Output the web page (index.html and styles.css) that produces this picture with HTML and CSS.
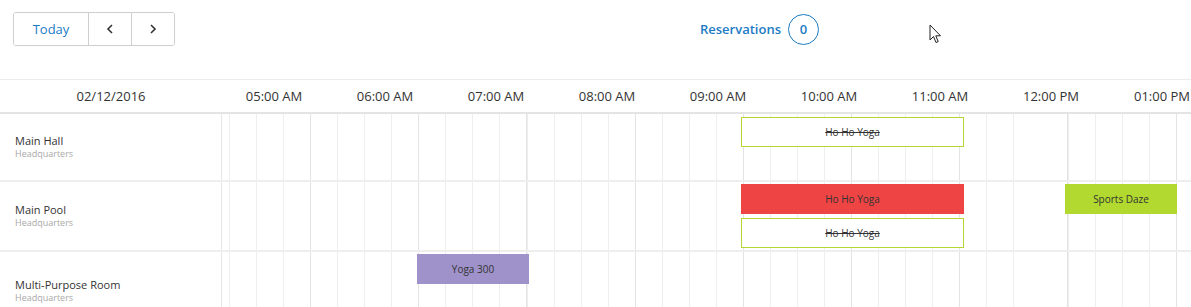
FILE: index.html
```html
<!DOCTYPE html>
<html lang="en">
<head>
    <meta charset="UTF-8">
    <meta name="viewport" content="width=device-width, initial-scale=1.0">
    <title>Room Scheduler</title>
    <link rel="stylesheet" href="styles.css">
</head>
<body>

<div class="scheduler">
    <div class="toolbar">
        <div class="btn-group">
            <button class="btn btn-today">Today</button>
            <button class="btn btn-icon">
                <svg width="8" height="10" viewBox="0 0 8 10"><polyline points="6,1 2,5 6,9" fill="none" stroke="#333" stroke-width="1.6"/></svg>
            </button>
            <button class="btn btn-icon">
                <svg width="8" height="10" viewBox="0 0 8 10"><polyline points="2,1 6,5 2,9" fill="none" stroke="#333" stroke-width="1.6"/></svg>
            </button>
        </div>
        <a class="reservations" href="#">Reservations <span class="badge">0</span></a>
        <svg class="cursor" width="13" height="20" viewBox="0 0 13 20">
            <path d="M1 1 L1 16 L4.5 12.5 L7 18.5 L9.2 17.6 L6.8 11.8 L11.5 11.8 Z" fill="#fff" stroke="#222" stroke-width="1" stroke-linejoin="round"/>
        </svg>
    </div>

    <div class="grid-head">
        <div class="date-cell">02/12/2016</div>
        <div class="hours">
            <div class="hour">05:00 AM</div>
            <div class="hour">06:00 AM</div>
            <div class="hour">07:00 AM</div>
            <div class="hour">08:00 AM</div>
            <div class="hour">09:00 AM</div>
            <div class="hour">10:00 AM</div>
            <div class="hour">11:00 AM</div>
            <div class="hour">12:00 PM</div>
            <div class="hour">01:00 PM</div>
        </div>
    </div>

    <div class="row row-hall">
        <div class="room">
            <div class="room-name">Main Hall</div>
            <div class="room-site">Headquarters</div>
        </div>
        <div class="timeline">
            <div class="lane">
                <div class="event event-cancelled" style="left: 519px; width: 223px;">Ho Ho Yoga</div>
            </div>
        </div>
    </div>

    <div class="row row-pool">
        <div class="room">
            <div class="room-name">Main Pool</div>
            <div class="room-site">Headquarters</div>
        </div>
        <div class="timeline">
            <div class="lane">
                <div class="event event-red" style="left: 519px; width: 223px;">Ho Ho Yoga</div>
                <div class="event event-green" style="left: 843px; width: 112px;">Sports Daze</div>
            </div>
            <div class="lane">
                <div class="event event-cancelled" style="left: 519px; width: 223px;">Ho Ho Yoga</div>
            </div>
        </div>
    </div>

    <div class="row row-multi">
        <div class="room">
            <div class="room-name">Multi-Purpose Room</div>
            <div class="room-site">Headquarters</div>
        </div>
        <div class="timeline">
            <div class="lane">
                <div class="event event-purple" style="left: 195px; width: 112px;">Yoga 300</div>
            </div>
        </div>
    </div>
</div>

</body>
</html>
```

FILE: styles.css
```css
body {
    font-family: "Open Sans", "Liberation Sans", sans-serif;
    margin: 0;
    padding: 0;
    color: #333;
    background-color: #fff;
    overflow: hidden;
}

.scheduler {
    width: 1191px;
    overflow: hidden;
}

/* toolbar */

.toolbar {
    height: 79px;
    box-sizing: border-box;
    padding: 12px 13px 0;
    display: flex;
    align-items: flex-start;
}

.btn-group {
    display: flex;
    height: 34px;
    border: 1px solid #cfcfcf;
    border-radius: 3px;
    box-sizing: border-box;
    overflow: hidden;
}

.btn {
    font-family: inherit;
    border: none;
    background-color: #fff;
    padding: 0;
    margin: 0;
    cursor: pointer;
    display: flex;
    align-items: center;
    justify-content: center;
}

.btn + .btn {
    border-left: 1px solid #cfcfcf;
}

.btn-today {
    width: 74px;
    font-size: 13px;
    color: #1b7bc4;
}

.btn-icon {
    width: 43px;
}

.reservations {
    margin-left: 525px;
    height: 34px;
    display: flex;
    align-items: center;
    gap: 7px;
    font-size: 13px;
    font-weight: 600;
    color: #1b7bc4;
    text-decoration: none;
}

.badge {
    width: 29px;
    height: 29px;
    border: 1px solid #1b7bc4;
    border-radius: 50%;
    display: flex;
    align-items: center;
    justify-content: center;
    font-size: 13px;
    font-weight: 600;
}

.cursor {
    margin-left: 110px;
    margin-top: 12px;
}

/* header */

.grid-head {
    display: flex;
    height: 35px;
    box-sizing: border-box;
    border-top: 1px solid #ececec;
    border-bottom: 2px solid #e4e4e4;
    font-size: 13px;
    color: #333;
}

.date-cell {
    flex: 0 0 222px;
    display: flex;
    align-items: center;
    justify-content: center;
}

.hours {
    display: flex;
}

.hour {
    flex: 0 0 111px;
    box-sizing: border-box;
    padding-right: 7px;
    display: flex;
    align-items: center;
    justify-content: center;
    white-space: nowrap;
}

/* rows */

.row {
    display: flex;
    border-bottom: 2px solid #eeeeee;
}

.row-hall {
    height: 66px;
}

.row-hall .timeline {
    padding-top: 3px;
}

.row-pool {
    height: 68px;
}

.row-multi {
    height: 78px;
}

.room {
    flex: 0 0 222px;
    border-right: 1px solid #e6e6e6;
    display: flex;
    flex-direction: column;
    justify-content: center;
    padding: 0 0 1px 15px;
    box-sizing: border-box;
}

.room-name {
    font-size: 11px;
    line-height: 15px;
    color: #333;
}

.room-site {
    font-size: 9px;
    line-height: 12px;
    color: #a8a8a8;
}

.timeline {
    flex: 1;
    padding-top: 2px;
    display: flex;
    flex-direction: column;
    gap: 4px;
    background-image:
        repeating-linear-gradient(to right, transparent 0, transparent 88px, #e3e3e3 88px, #e3e3e3 89px, transparent 89px, transparent 108.2px),
        repeating-linear-gradient(to right, transparent 0, transparent 7px, #eeeeee 7px, #eeeeee 8px, transparent 8px, transparent 27.05px);
}

.lane {
    position: relative;
    height: 30px;
}

.event {
    position: absolute;
    top: 0;
    height: 30px;
    box-sizing: border-box;
    font-size: 10px;
    line-height: 30px;
    text-align: center;
    color: #333;
    white-space: nowrap;
    overflow: hidden;
}

.event-cancelled {
    background-color: #fff;
    border: 1px solid #b3d636;
    line-height: 28px;
    text-decoration: line-through;
}

.event-red {
    background-color: #ef4444;
}

.event-green {
    background-color: #b1d930;
}

.event-purple {
    background-color: #9f92ca;
}
```
